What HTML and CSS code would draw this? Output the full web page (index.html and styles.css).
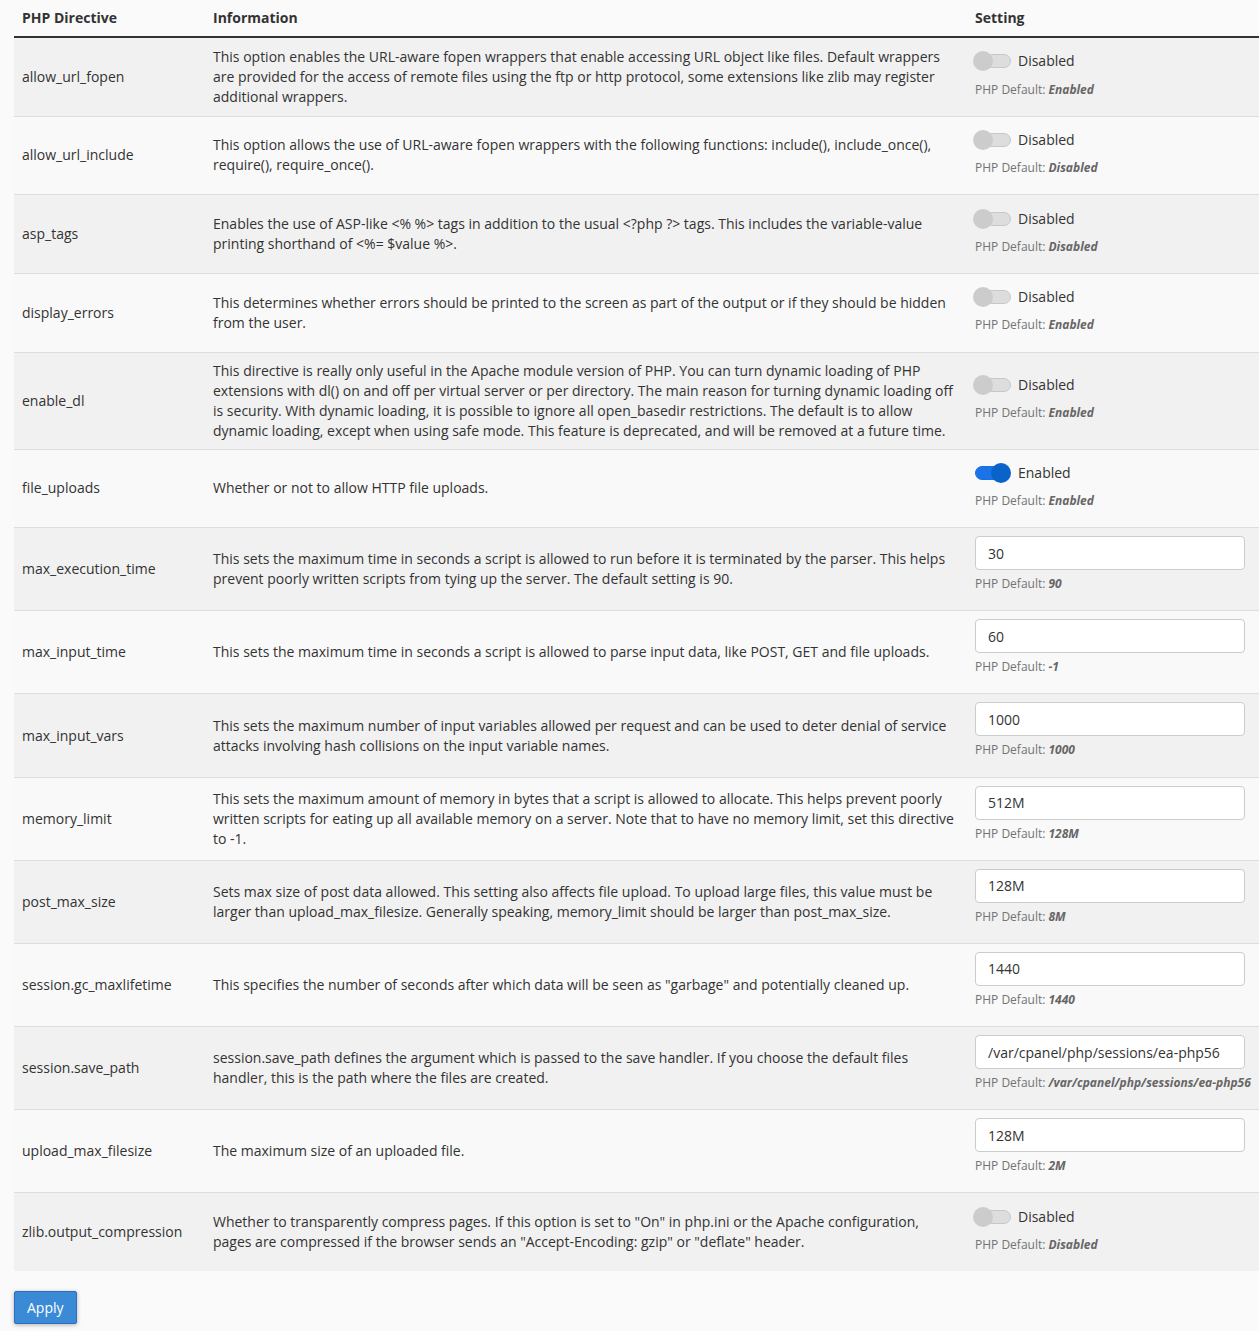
FILE: index.html
```html
<!DOCTYPE html>
<html lang="en">

<head>
    <meta charset="UTF-8">
    <meta name="viewport" content="width=device-width, initial-scale=1.0">
    <title>PHP Directives</title>
    <link rel="stylesheet" href="styles.css">
</head>

<body>
    <div class="page">
        <form onsubmit="return false">
            <table class="directives">
                <thead>
                    <tr>
                        <th class="colName">PHP Directive</th>
                        <th class="colInfo">Information</th>
                        <th class="colSetting">Setting</th>
                    </tr>
                </thead>
                <tbody>
                    <tr>
                        <td>allow_url_fopen</td>
                        <td>This option enables the URL-aware fopen wrappers that enable accessing URL object like files. Default wrappers are provided for the access of remote files using the ftp or http protocol, some extensions like zlib may register additional wrappers.</td>
                        <td>
                            <div class="switchLine"><span class="toggle"></span>Disabled</div>
                            <div class="helpBlock">PHP Default: <em>Enabled</em></div>
                        </td>
                    </tr>
                    <tr>
                        <td>allow_url_include</td>
                        <td>This option allows the use of URL-aware fopen wrappers with the following functions: include(), include_once(), require(), require_once().</td>
                        <td>
                            <div class="switchLine"><span class="toggle"></span>Disabled</div>
                            <div class="helpBlock">PHP Default: <em>Disabled</em></div>
                        </td>
                    </tr>
                    <tr>
                        <td>asp_tags</td>
                        <td>Enables the use of ASP-like &lt;% %&gt; tags in addition to the usual &lt;?php ?&gt; tags. This includes the variable-value printing shorthand of &lt;%= $value %&gt;.</td>
                        <td>
                            <div class="switchLine"><span class="toggle"></span>Disabled</div>
                            <div class="helpBlock">PHP Default: <em>Disabled</em></div>
                        </td>
                    </tr>
                    <tr>
                        <td>display_errors</td>
                        <td>This determines whether errors should be printed to the screen as part of the output or if they should be hidden from the user.</td>
                        <td>
                            <div class="switchLine"><span class="toggle"></span>Disabled</div>
                            <div class="helpBlock">PHP Default: <em>Enabled</em></div>
                        </td>
                    </tr>
                    <tr>
                        <td>enable_dl</td>
                        <td>This directive is really only useful in the Apache module version of PHP. You can turn dynamic loading of PHP extensions with dl() on and off per virtual server or per directory. The main reason for turning dynamic loading off is security. With dynamic loading, it is possible to ignore all open_basedir restrictions. The default is to allow dynamic loading, except when using safe mode. This feature is deprecated, and will be removed at a future time.</td>
                        <td>
                            <div class="switchLine"><span class="toggle"></span>Disabled</div>
                            <div class="helpBlock">PHP Default: <em>Enabled</em></div>
                        </td>
                    </tr>
                    <tr>
                        <td>file_uploads</td>
                        <td>Whether or not to allow HTTP file uploads.</td>
                        <td>
                            <div class="switchLine"><span class="toggle on"></span>Enabled</div>
                            <div class="helpBlock">PHP Default: <em>Enabled</em></div>
                        </td>
                    </tr>
                    <tr>
                        <td>max_execution_time</td>
                        <td>This sets the maximum time in seconds a script is allowed to run before it is terminated by the parser. This helps prevent poorly written scripts from tying up the server. The default setting is 90.</td>
                        <td>
                            <input type="text" class="formControl" value="30">
                            <div class="helpBlock">PHP Default: <em>90</em></div>
                        </td>
                    </tr>
                    <tr>
                        <td>max_input_time</td>
                        <td>This sets the maximum time in seconds a script is allowed to parse input data, like POST, GET and file uploads.</td>
                        <td>
                            <input type="text" class="formControl" value="60">
                            <div class="helpBlock">PHP Default: <em>-1</em></div>
                        </td>
                    </tr>
                    <tr>
                        <td>max_input_vars</td>
                        <td>This sets the maximum number of input variables allowed per request and can be used to deter denial of service attacks involving hash collisions on the input variable names.</td>
                        <td>
                            <input type="text" class="formControl" value="1000">
                            <div class="helpBlock">PHP Default: <em>1000</em></div>
                        </td>
                    </tr>
                    <tr>
                        <td>memory_limit</td>
                        <td>This sets the maximum amount of memory in bytes that a script is allowed to allocate. This helps prevent poorly written scripts for eating up all available memory on a server. Note that to have no memory limit, set this directive to -1.</td>
                        <td>
                            <input type="text" class="formControl" value="512M">
                            <div class="helpBlock">PHP Default: <em>128M</em></div>
                        </td>
                    </tr>
                    <tr>
                        <td>post_max_size</td>
                        <td>Sets max size of post data allowed. This setting also affects file upload. To upload large files, this value must be larger than upload_max_filesize. Generally speaking, memory_limit should be larger than post_max_size.</td>
                        <td>
                            <input type="text" class="formControl" value="128M">
                            <div class="helpBlock">PHP Default: <em>8M</em></div>
                        </td>
                    </tr>
                    <tr>
                        <td>session.gc_maxlifetime</td>
                        <td>This specifies the number of seconds after which data will be seen as "garbage" and potentially cleaned up.</td>
                        <td>
                            <input type="text" class="formControl" value="1440">
                            <div class="helpBlock">PHP Default: <em>1440</em></div>
                        </td>
                    </tr>
                    <tr>
                        <td>session.save_path</td>
                        <td>session.save_path defines the argument which is passed to the save handler. If you choose the default files handler, this is the path where the files are created.</td>
                        <td>
                            <input type="text" class="formControl" value="/var/cpanel/php/sessions/ea-php56">
                            <div class="helpBlock">PHP Default: <em>/var/cpanel/php/sessions/ea-php56</em></div>
                        </td>
                    </tr>
                    <tr>
                        <td>upload_max_filesize</td>
                        <td>The maximum size of an uploaded file.</td>
                        <td>
                            <input type="text" class="formControl" value="128M">
                            <div class="helpBlock">PHP Default: <em>2M</em></div>
                        </td>
                    </tr>
                    <tr>
                        <td>zlib.output_compression</td>
                        <td>Whether to transparently compress pages. If this option is set to "On" in php.ini or the Apache configuration, pages are compressed if the browser sends an "Accept-Encoding: gzip" or "deflate" header.</td>
                        <td>
                            <div class="switchLine"><span class="toggle"></span>Disabled</div>
                            <div class="helpBlock">PHP Default: <em>Disabled</em></div>
                        </td>
                    </tr>
                </tbody>
            </table>
            <button type="submit" class="btnApply">Apply</button>
        </form>
    </div>
</body>

</html>
```

FILE: styles.css
```css
body {
    margin: 0;
    background-color: #fafafa;
    color: #333;
    font-family: "Open Sans", "Liberation Sans", sans-serif;
    font-size: 14px;
    line-height: 20px;
}

.page {
    padding: 0 0 8px 14px;
}

table.directives {
    width: 100%;
    border-collapse: collapse;
    table-layout: fixed;
}

/* widths below are content widths, cell padding comes on top */
.colName {
    width: 175px;
}

.colSetting {
    width: 276px;
}

table.directives th,
table.directives td {
    padding: 8px;
    text-align: left;
    vertical-align: middle;
}

table.directives th {
    font-weight: bold;
    border-bottom: 2px solid #333;
}

table.directives tbody tr {
    border-top: 1px solid #ddd;
}

table.directives tbody tr:first-child {
    border-top: none;
}

table.directives tbody tr:nth-child(odd) {
    background-color: #f1f1f1;
}

table.directives tbody tr:nth-child(even) {
    background-color: #f9f9f9;
}

.switchLine {
    display: flex;
    align-items: center;
    gap: 7px;
    box-sizing: border-box;
    height: 29.5px;
    padding-top: 1px;
}

.toggle {
    position: relative;
    display: inline-block;
    width: 38px;
    height: 20px;
    margin-left: -2px;
}

.toggle::before {
    content: "";
    position: absolute;
    left: 1px;
    top: 3px;
    width: 35px;
    height: 12px;
    border: 1px solid #c8c8c8;
    border-radius: 7px;
    background-color: #ddd;
}

.toggle::after {
    content: "";
    position: absolute;
    left: 0;
    top: 0;
    width: 20px;
    height: 20px;
    border-radius: 50%;
    background-color: #ccc;
}

.toggle.on::before {
    left: 2px;
    width: 26px;
    border-color: #1572e0;
    background-color: #1a73e8;
}

.toggle.on::after {
    left: 18px;
    background-color: #0a63c9;
}

.helpBlock {
    margin: 5px 0 10px;
    font-size: 12px;
    line-height: 1.42857;
    color: #737373;
    white-space: nowrap;
}

.helpBlock em {
    font-weight: bold;
    color: #666;
}

.formControl {
    display: block;
    box-sizing: border-box;
    width: 270px;
    height: 34px;
    padding: 6px 12px;
    border: 1px solid #ccc;
    border-radius: 4px;
    background-color: #fff;
    color: #333;
    font-family: "Open Sans", "Liberation Sans", sans-serif;
    font-size: 14px;
}

.btnApply {
    margin-top: 20px;
    padding: 6px 12px;
    border: 1px solid #2a6fbf;
    border-radius: 2px;
    background-color: #3a8ad6;
    color: #fff;
    font-family: "Open Sans", "Liberation Sans", sans-serif;
    font-size: 14px;
    line-height: 19px;
    box-shadow: 0 1px 4px rgba(0, 0, 0, 0.3);
    cursor: pointer;
}
```
